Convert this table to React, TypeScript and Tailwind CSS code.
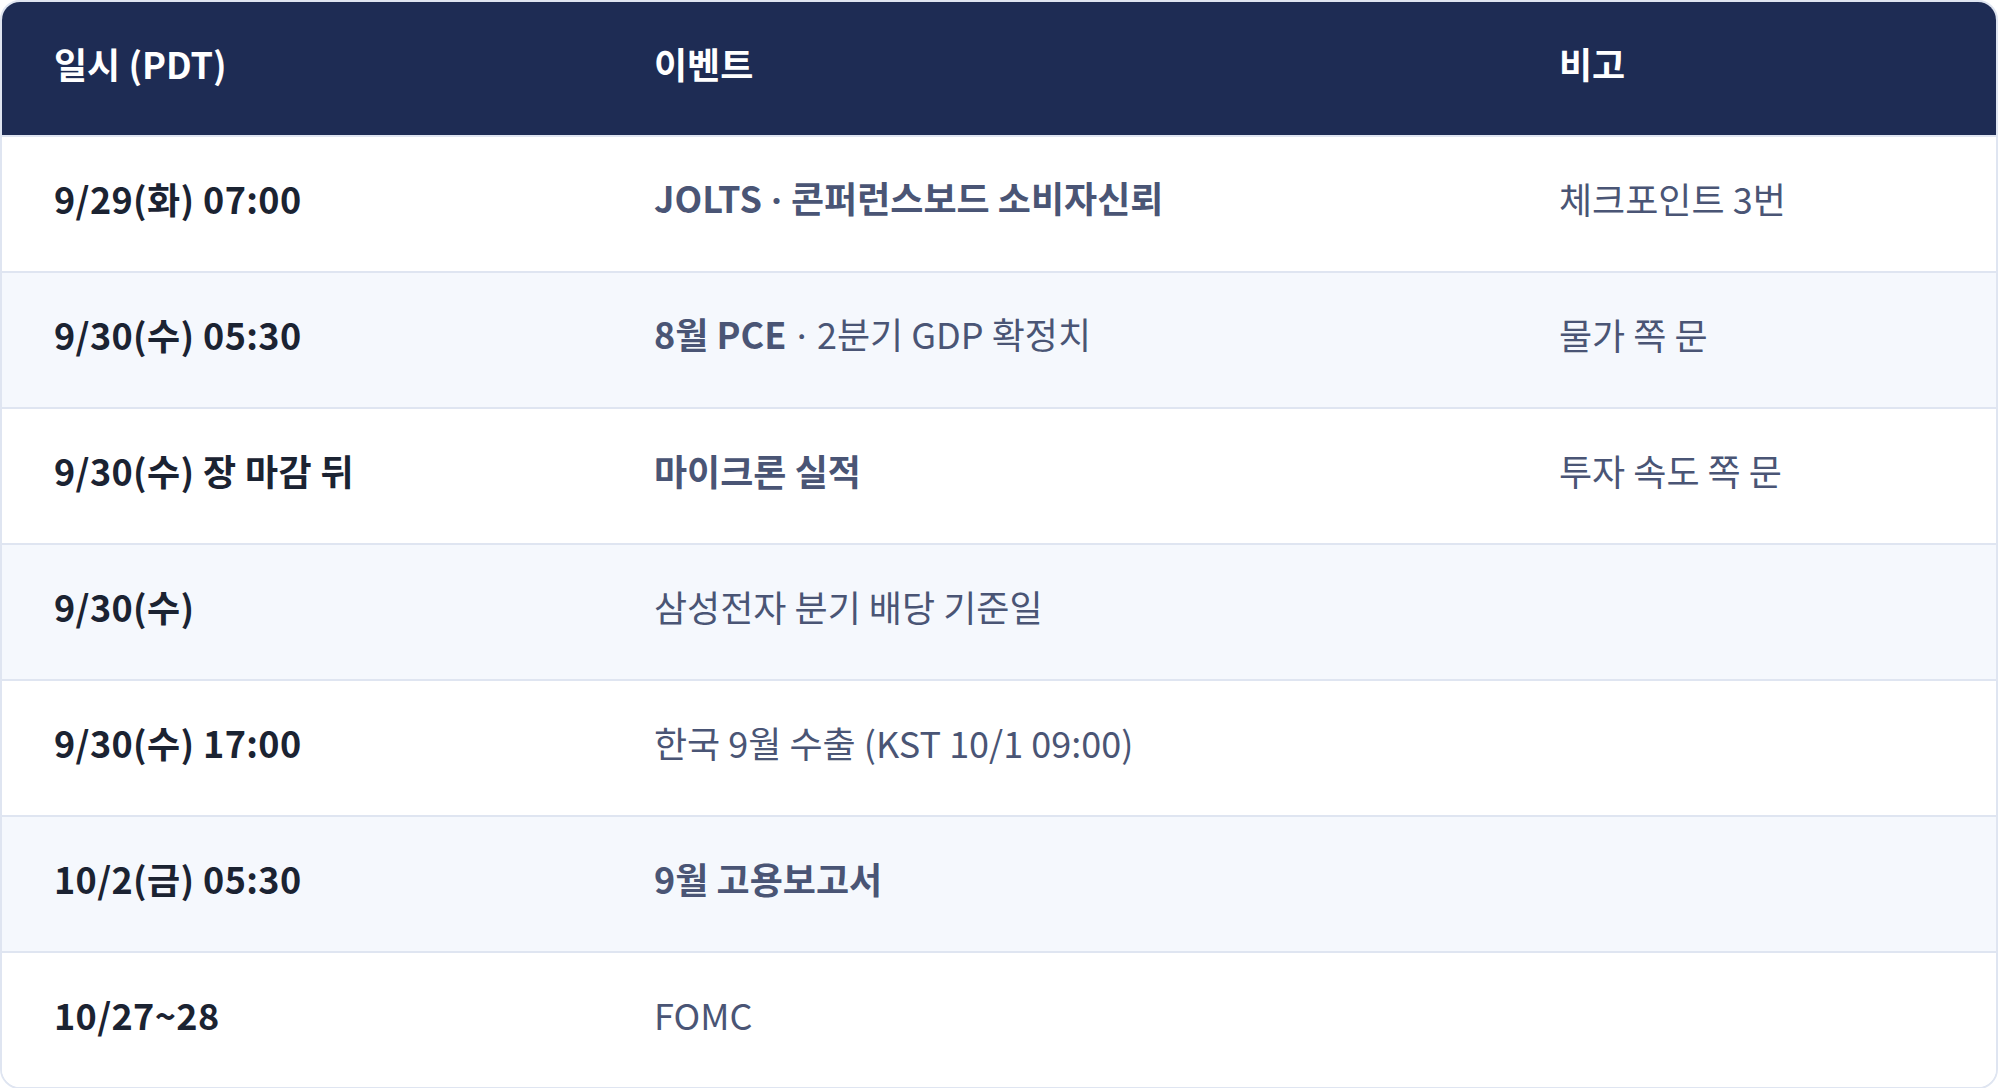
import React from "react";

type Row = {
  date: string;
  event: React.ReactNode;
  note?: string;
};

const Dot = () => <span style={{ fontFamily: "Inter, sans-serif" }}> · </span>;

const rows: Row[] = [
  {
    date: "9/29(화) 07:00",
    event: (
      <span className="font-bold">
        JOLTS<Dot />콘퍼런스보드 소비자신뢰
      </span>
    ),
    note: "체크포인트 3번",
  },
  {
    date: "9/30(수) 05:30",
    event: (
      <>
        <span className="font-bold">8월 PCE</span>
        <Dot />
        <span>2분기 GDP 확정치</span>
      </>
    ),
    note: "물가 쪽 문",
  },
  {
    date: "9/30(수) 장 마감 뒤",
    event: <span className="font-bold">마이크론 실적</span>,
    note: "투자 속도 쪽 문",
  },
  { date: "9/30(수)", event: <span>삼성전자 분기 배당 기준일</span> },
  { date: "9/30(수) 17:00", event: <span>한국 9월 수출 (KST 10/1 09:00)</span> },
  { date: "10/2(금) 05:30", event: <span className="font-bold">9월 고용보고서</span> },
  { date: "10/27~28", event: <span>FOMC</span> },
];

export default function App() {
  return (
    <div
      className="w-[2000px] bg-white"
      style={{ fontFamily: '"Noto Sans CJK KR", "Noto Sans", sans-serif' }}
    >
      <div className="w-[1998px] overflow-hidden rounded-[20px] border-2 border-[#dfe5f1]">
        <div className="flex h-[133px] items-center bg-[#1e2c54] pb-[10px] text-[36px] leading-[1.2] font-bold text-white">
          <div className="w-[600px] pl-[52px]">일시 (PDT)</div>
          <div className="w-[905px] pl-[52px]">이벤트</div>
          <div className="flex-1 pl-[52px]">비고</div>
        </div>
        {rows.map((r, i) => (
          <div
            key={i}
            className={`flex h-[136px] items-center border-t-2 border-[#dfe5f1] pb-[10px] text-[36px] leading-[1.2] ${
              i % 2 === 1 ? "bg-[#f5f8fd]" : "bg-white"
            }`}
          >
            <div className="w-[600px] pl-[52px] font-bold tracking-[0.01em] text-[#1b2332]">{r.date}</div>
            <div className="w-[905px] pl-[52px] text-[#4a5575]">{r.event}</div>
            <div className="flex-1 pl-[52px] text-[#4a5575]">{r.note ?? ""}</div>
          </div>
        ))}
      </div>
    </div>
  );
}
